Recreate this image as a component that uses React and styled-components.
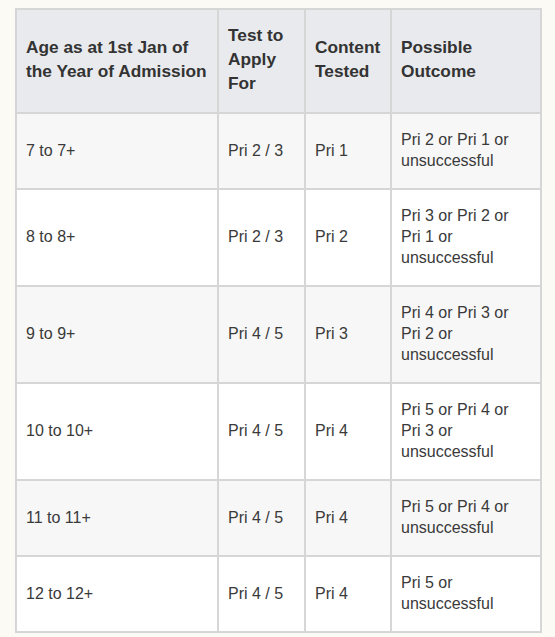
import styled, { createGlobalStyle } from "styled-components";

const GlobalStyle = createGlobalStyle`
  html, body {
    margin: 0;
    padding: 0;
    background: #fbfaf5;
  }
  body {
    font-family: "Liberation Sans", Arial, sans-serif;
    color: #333;
  }
`;

const Page = styled.div`
  padding: 8px 15px 6px 15px;
`;

const Table = styled.table`
  width: 525px;
  table-layout: fixed;
  border-collapse: collapse;
  background: #fff;
  border: 2px solid #d6d6d6;
`;

const HeadCell = styled.th`
  background: #e8eaed;
  border: 2px solid #d6d6d6;
  padding: 13px 8px 17px 9px;
  text-align: left;
  vertical-align: middle;
  font-size: 17.3px;
  line-height: 24px;
  font-weight: 700;
  color: #333;
`;

const Row = styled.tr`
  background: ${(p) => (p.$striped ? "#f7f7f7" : "#fff")};
`;

const Cell = styled.td`
  border: 2px solid #d6d6d6;
  padding: 15px 6px 17px 9px;
  height: ${(p) => p.$h}px;
  box-sizing: border-box;
  vertical-align: middle;
  font-size: 16px;
  line-height: 21px;
  color: #3a3a3a;
`;

const rows = [
  { age: "7 to 7+", test: "Pri 2 / 3", content: "Pri 1", outcome: ["Pri 2 or Pri 1 or", "unsuccessful"], h: 76 },
  { age: "8 to 8+", test: "Pri 2 / 3", content: "Pri 2", outcome: ["Pri 3 or Pri 2 or", "Pri 1 or", "unsuccessful"], h: 97 },
  { age: "9 to 9+", test: "Pri 4 / 5", content: "Pri 3", outcome: ["Pri 4 or Pri 3 or", "Pri 2 or", "unsuccessful"], h: 97 },
  { age: "10 to 10+", test: "Pri 4 / 5", content: "Pri 4", outcome: ["Pri 5 or Pri 4 or", "Pri 3 or", "unsuccessful"], h: 97 },
  { age: "11 to 11+", test: "Pri 4 / 5", content: "Pri 4", outcome: ["Pri 5 or Pri 4 or", "unsuccessful"], h: 75 },
  { age: "12 to 12+", test: "Pri 4 / 5", content: "Pri 4", outcome: ["Pri 5 or", "unsuccessful"], h: 76 },
];

const Lines = ({ lines }) =>
  lines.map((l, i) => (
    <span key={i}>
      {l}
      {i < lines.length - 1 && <br />}
    </span>
  ));

export default function App() {
  return (
    <Page>
      <GlobalStyle />
      <Table>
        <colgroup>
          <col style={{ width: 202 }} />
          <col style={{ width: 87 }} />
          <col style={{ width: 86 }} />
          <col style={{ width: 150 }} />
        </colgroup>
        <thead>
          <tr>
            <HeadCell>
              Age as at 1st Jan of
              <br />
              the Year of Admission
            </HeadCell>
            <HeadCell>
              Test to
              <br />
              Apply
              <br />
              For
            </HeadCell>
            <HeadCell>
              Content
              <br />
              Tested
            </HeadCell>
            <HeadCell>
              Possible
              <br />
              Outcome
            </HeadCell>
          </tr>
        </thead>
        <tbody>
          {rows.map((r, i) => (
            <Row key={r.age} $striped={i % 2 === 0}>
              <Cell $h={r.h}>{r.age}</Cell>
              <Cell $h={r.h}>{r.test}</Cell>
              <Cell $h={r.h}>{r.content}</Cell>
              <Cell $h={r.h}>
                <Lines lines={r.outcome} />
              </Cell>
            </Row>
          ))}
        </tbody>
      </Table>
    </Page>
  );
}
